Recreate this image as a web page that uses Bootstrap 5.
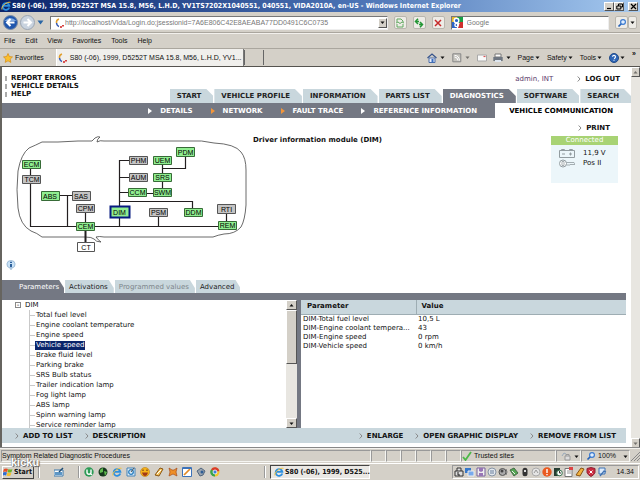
<!DOCTYPE html>
<html lang="en">
<head>
<meta charset="utf-8">
<meta name="viewport" content="width=device-width, initial-scale=1">
<title>VIDA - Vehicle communication</title>
<link rel="stylesheet" href="https://cdn.jsdelivr.net/npm/bootstrap@5.3.0/dist/css/bootstrap.min.css">
<style>
:root{--face:#d4d0c8;--slate:#747883;--pale:#c9d7dd;--ui:"Liberation Sans",Tahoma,sans-serif;--uibold:"DejaVu Sans Condensed","DejaVu Sans",sans-serif;--web:"DejaVu Sans",Verdana,sans-serif}
body{font:7px/10px var(--ui);color:#111;background:var(--face);overflow:hidden}
button,input,table{font:inherit;color:inherit}
button{border:0;padding:0;background:none}
a{color:inherit;text-decoration:none}
svg{display:block;flex:none}
.i7{width:7px;height:7px}.i10{width:10px;height:10px}
.titlebar{height:12px;padding:0 2px 0 1px;background:linear-gradient(90deg,#0a246a,#4a72b4 55%,#a6caf0);color:#fff;font-weight:700;font-family:var(--uibold);gap:1px}
.winbtn,.scroll-btn{width:10px;height:9px;background:var(--face);border:1px solid;border-color:#fff #555 #555 #fff;display:flex;align-items:center;justify-content:center}
.addrbar{height:21px;padding:0 3px;gap:2px}
.field{height:14px;background:#fff;border:1px solid #777;border-right-color:#eee;border-bottom-color:#eee;min-width:0}
.field input{border:0;outline:0;background:none;min-width:0;padding:0;color:#777;width:100%}
.search-field{width:25%}
.sqbtn{width:13px;height:13px;border:1px solid #b9b6ae;background:#eeece7;border-radius:2px;display:flex;align-items:center;justify-content:center}
.menubar{height:15px;padding:0 4px;gap:10px;border-top:1px solid #f2f0ec;box-shadow:0 -1px #aaa69e}
.cmdbar{height:18px;border-top:1px solid #aaa69e;padding-left:3px}
.cmds{gap:2px}
.fav{gap:2px;margin-right:12px}
.pagetab{width:188px;height:17px;padding:0 2px;gap:2px;background:#f0efec;border:1px solid #777;border-width:0 1px 0 0;box-shadow:inset 1px 0 #fff;white-space:nowrap}
.newtab{width:20px;height:15px;border-right:1px solid #666;border-left:1px solid #666}
.viewport-row{border-top:1px solid #55534f;border-left:2px solid #66645f;background:#fff;min-height:0}
.scrollbar-v{width:11px;background:#e8e6e1}
.scroll-btn{width:100%;height:10px;flex:none}
.app-area{font-family:var(--web);min-width:0}
.strong-link{font-weight:700;line-height:8px;display:flex;align-items:center;gap:4px;white-space:nowrap}
.dash{width:2px;height:5px;background:#aaa}
.top-links{padding:7px 3px 0}
.maintabs{gap:1px;margin-top:-9px}
.cut-tab{height:14px;padding:0 12px 0 7px;background:var(--pale);color:#222;display:flex;align-items:center;clip-path:polygon(0 0,calc(100% - 7px) 0,100% 7px,100% 100%,0 100%);white-space:nowrap;font-weight:700}
.cut-tab.on{background:var(--slate);color:#fff}
.subnav{height:15px;background:var(--slate);color:#fff;font-weight:700}
.subnav a{display:flex;align-items:center;gap:8px;white-space:nowrap;padding-right:18px}
.subnav a.here{background:#fff;color:#000;padding:0 18px 0 14px}
.module-view{padding-top:2px}
.diagram{width:248px;height:124px}
.diagram text{font:7px "Liberation Sans",Arial,sans-serif;text-anchor:middle}
.module-name{font-size:inherit;line-height:8px;padding:16px 0 0 3px}
.side{padding:4px 13px 0 0}
.status-box{width:67px;height:47px;background:#ecf6fa}
.status-head{height:9px;line-height:9px;background:#a8d374;color:#fff;text-align:center;margin-bottom:3px}
.subtabs .cut-tab{height:13px;font-weight:400;padding:0 6px 0 4px;clip-path:polygon(0 0,calc(100% - 5px) 0,100% 8px,100% 100%,0 100%)}
.subtabs .cut-tab.on{padding-left:17px;padding-right:5px}
.subtabs .cut-tab:disabled{color:#7d868b}
.subtabs{gap:1px}
.panes{height:135px;background:var(--slate);padding-top:7px;margin-right:5px}
.tree-pane{flex:0 0 295px;background:#fff;min-width:0}
.tree{padding-left:13px;overflow:hidden}
.tree ul{list-style:none;margin:0 0 0 14px;padding:0;border-left:1px solid #c9c9c9}
.tree li{height:10px;display:flex;align-items:center}
.tree li::before{content:"";width:5px;border-top:1px solid #c9c9c9}
.tree button{line-height:9px;padding:0 1px;white-space:nowrap}
.tree .picked{background:#0a246a;color:#fff}
.twig{width:6px;height:6px;border:1px solid #888;line-height:4px;display:flex;align-items:center;justify-content:center}
.values{table-layout:fixed;width:100%;line-height:9px}
.values col:first-child{width:115px}
.values th{height:14px;background:var(--pale);border-bottom:1px solid #9eadb3;padding:0 6px}
.values th+th{border-left:1px solid #9eadb3;padding-left:5px}
.values td{padding:0 2px;white-space:nowrap;overflow:hidden;text-overflow:ellipsis}
.actions{height:15px;background:var(--pale);margin:0 5px 5px 0;padding:0 10px 0 13px}
.statusbar{height:15px;border-top:1px solid #f4f2ee;box-shadow:0 -1px #888;padding-left:1px}
.well{height:12px;border:1px solid;border-color:#999 #f5f5f2 #f5f5f2 #999;display:flex;align-items:center;gap:2px}
.slot{width:15px}
.zone{width:95px}
.taskbar{height:17px;border-top:1px solid #fff;padding:0 1px 0 2px}
.startbtn{height:13px;width:32px;border:1px solid;border-color:#fff #444 #444 #fff;font-weight:700;font-family:var(--uibold);display:flex;align-items:center;gap:1px}
.grip{width:2px;height:12px;border-left:1px solid #999;border-right:1px solid #fff}
.launcher{margin:0 14px}
.running{margin-left:44px}
.taskbtn{width:100px;height:14px;background:#eae8e4;border:1px solid;border-color:#444 #fff #fff #444;font-weight:700;font-family:var(--uibold);display:flex;align-items:center;gap:1px;white-space:nowrap;padding-left:3px}
.tray{height:14px;gap:1px;padding:0 4px 0 1px;border:1px solid;border-color:#999 #fff #fff #999}
.stamp{left:11px;bottom:12px;font:700 11px/12px "Liberation Sans",Arial,sans-serif;color:#fff;text-shadow:1px 1px 1px #555,0 0 1px #555}
</style>
<script src="https://cdn.jsdelivr.net/npm/bootstrap@5.3.0/dist/js/bootstrap.bundle.min.js"></script>
</head>
<body class="vh-100 d-flex flex-column position-relative">
<svg width="0" height="0" class="position-absolute" aria-hidden="true">
<symbol id="ie" viewBox="0 0 10 10"><path d="M8.300 6.500A3.400 3.400 0 1 1 8.400 4.800H2.500" fill="none" stroke="#2b8fe0" stroke-width="1.800"/><path d="M1 8.500C-.5 6 6 .2 9.500 1.300" fill="none" stroke="#f3c23b"/></symbol>
<symbol id="spin" viewBox="0 0 10 10"><path d="M4 1Q1 2 1.500 5" fill="none" stroke="#e0a030" stroke-width="1.500"/><path d="M1.500 5Q2 8 4 8.500" fill="none" stroke="#3558b0" stroke-width="1.500"/><path d="M5 9h2M8 7v1.500" stroke="#d02020" stroke-width="1.700"/></symbol>
<symbol id="dn" viewBox="0 0 7 7"><path d="M1.500 2.500h4l-2 2.500z" fill="#111"/></symbol>
<symbol id="up" viewBox="0 0 7 7"><path d="M1.500 4.500h4l-2-2.500z" fill="#111"/></symbol>
<symbol id="chev" viewBox="0 0 4 6"><path d="M.7.5L3 3 .7 5.500" fill="none" stroke="#888"/></symbol>
<symbol id="tri" viewBox="0 0 4 6"><path d="M0 0l4 3L0 6z" fill="currentColor"/></symbol>
<symbol id="mag" viewBox="0 0 10 10"><path d="M4.500 5.500L1.500 8.500" stroke="#2763b8" stroke-width="1.700"/><circle cx="6" cy="4" r="2.400" fill="#e1efff" stroke="#3c7bd0" stroke-width="1.200"/></symbol>
</svg>

<header>
<div class="titlebar d-flex align-items-center">
<svg class="i10"><use href="#ie"/></svg><span class="flex-grow-1 text-nowrap overflow-hidden">S80 (-06), 1999, D5252T MSA 15.8, M56, L.H.D, YV1TS7202X1040551, 040551, VIDA2010A, en-US - Windows Internet Explorer</span>
<div class="d-flex"><button class="winbtn" aria-label="Minimize"><svg class="i7"><path d="M1 5.500h4" stroke="#000" stroke-width="1.200"/></svg></button><button class="winbtn" aria-label="Restore"><svg class="i7"><path d="M2.500 3V1h4v3H5M.8 3h4v3h-4z" fill="none" stroke="#000"/></svg></button><button class="winbtn ms-1" aria-label="Close"><svg class="i7"><path d="M1 1l5 5M6 1L1 6" stroke="#000" stroke-width="1.200"/></svg></button></div>
</div>
<div class="addrbar d-flex align-items-center">
<button aria-label="Back"><svg width="15" height="15" viewBox="0 0 15 15"><circle cx="7.500" cy="7.500" r="7" fill="#1f56ad" stroke="#7a8ba5"/><path d="M1.500 6Q7 0 13.500 6z" fill="#7fa9e0"/><path d="M11.500 7.500h-7M7.500 4L4 7.500 7.500 11" fill="none" stroke="#fff" stroke-width="2"/></svg></button>
<button aria-label="Forward"><svg width="15" height="15" viewBox="0 0 15 15"><circle cx="7.500" cy="7.500" r="7" fill="#c9d3df" stroke="#9aa5b3"/><path d="M3.500 7.500h7M7.500 4L11 7.500 7.500 11" fill="none" stroke="#fff" stroke-width="2"/></svg></button>
<svg class="i7 me-1" viewBox="0 0 7 7"><path d="M.5 1.500h6l-3 4z" fill="#2a66a5"/></svg>
<div class="field d-flex align-items-center flex-grow-1 ps-1"><svg class="i10"><use href="#spin"/></svg><input aria-label="Address" value="http://localhost/Vida/Login.do;jsessionid=7A6E806C42E8AEABA77DD0491C6C0735"><button class="scroll-btn w-auto me-0" aria-label="Address history"><svg class="i7"><use href="#dn"/></svg></button></div>
<button class="sqbtn ms-1" aria-label="Compatibility view"><svg class="i10" viewBox="0 0 10 10"><path d="M2 4V1h4l2 2v1M2 6v3h6V6" fill="none" stroke="#61a961"/><path d="M1 5l2-1 2 1.500L7 4l2 1" fill="none" stroke="#61a961"/></svg></button>
<button class="sqbtn ms-1" aria-label="Refresh"><svg class="i10" viewBox="0 0 10 10"><path d="M4 .8L1.500 3.500 4 6M1.500 3.500H5M6 4l2.500 2.500L6 9.200M8.500 6.500H5" fill="none" stroke="#249635" stroke-width="1.500"/></svg></button>
<button class="sqbtn ms-1" aria-label="Stop"><svg class="i10" viewBox="0 0 10 10"><path d="M2 2l6 6M8 2L2 8" stroke="#c62a2a" stroke-width="1.500"/></svg></button>
<div class="field search-field d-flex align-items-center ms-1"><svg class="me-1" width="11" height="11" viewBox="0 0 11 11"><path d="M0 0h5v5H0z" fill="#e7b82d"/><path d="M5 0h6v6H5z" fill="#18a045"/><path d="M0 5h5v6H0z" fill="#2b63c6"/><path d="M8 5h3v6H6z" fill="#cf3030"/><circle cx="4.500" cy="3.500" r="2.300" fill="#2b63c6" stroke="#fff" stroke-width="1.400"/><circle cx="4.500" cy="8" r="1.600" fill="none" stroke="#fff" stroke-width="1.400"/></svg><input aria-label="Search" value="Google"></div>
<div class="d-flex ms-1"><button class="sqbtn" aria-label="Search"><svg class="i10"><use href="#mag"/></svg></button><button class="sqbtn w-auto" aria-label="Search options"><svg class="i7"><use href="#dn"/></svg></button></div>
</div>
<nav class="menubar d-flex align-items-center" aria-label="Browser menu"><button>File</button><button>Edit</button><button>View</button><button>Favorites</button><button>Tools</button><button>Help</button></nav>
<div class="cmdbar d-flex align-items-center">
<button class="fav d-flex align-items-center"><svg class="i10" viewBox="0 0 10 10"><path d="M5 .5l1.400 3 3.100.4-2.300 2.200.6 3.300L5 7.800 2.200 9.400l.6-3.300L.5 3.900l3.100-.4z" fill="#fbc02d" stroke="#d58b16" stroke-width=".7"/></svg>Favorites</button>
<button class="pagetab d-flex align-items-center"><svg class="i10"><use href="#spin"/></svg>S80 (-06), 1999, D5252T MSA 15.8, M56, L.H.D, YV1...</button><button class="newtab" aria-label="New tab"></button>
<div class="cmds d-flex align-items-center ms-auto">
<svg class="i10" viewBox="0 0 10 10"><path d="M.5 5L5 1l4.500 4" fill="none" stroke="#35538b" stroke-width="1.200"/><path d="M2 5h6v4.500H2z" fill="#e9effc" stroke="#4a6da8"/><path d="M4.500 6h2v3.500h-2z" fill="#3a6ec0"/></svg><svg class="i7 me-1"><use href="#dn"/></svg>
<svg class="i10" viewBox="0 0 10 10"><path d="M.8.8h8v8h-8z" fill="#c5c3bd" stroke="#888"/><path d="M2.500 4Q5.500 4 6 7.500M2.500 2.300Q7 2.500 7.500 7.500" fill="none" stroke="#fff"/></svg><svg class="i7 me-1 opacity-50"><use href="#dn"/></svg>
<svg class="i10" viewBox="0 0 10 10"><path d="M.5 2h9v6h-9z" fill="#fafafa" stroke="#aaa"/><path d="M6.500 3.500h2" stroke="#d55" stroke-width="1.200"/></svg>
<svg class="i10 ms-1" viewBox="0 0 10 10"><path d="M2 1h6v3H2z" fill="#fff" stroke="#777"/><path d="M.3 4h9.400v4H.3z" fill="#6f7782"/><path d="M2 7h6v2H2z" fill="#dce5ef"/></svg><svg class="i7 me-1"><use href="#dn"/></svg>
<button class="d-flex align-items-center me-1">Page<svg class="i7"><use href="#dn"/></svg></button><button class="d-flex align-items-center me-1">Safety<svg class="i7"><use href="#dn"/></svg></button><button class="d-flex align-items-center me-1">Tools<svg class="i7"><use href="#dn"/></svg></button>
<button class="d-flex align-items-center" aria-label="Help"><svg class="i10" viewBox="0 0 10 10"><circle cx="5" cy="5" r="4.500" fill="#2f66b7" stroke="#234b87"/><path d="M3.500 3.800Q3.600 2.400 5 2.400T6.500 3.800 5 5.800M5 6.800v1" fill="none" stroke="#fff" stroke-width="1.100"/></svg><svg class="i7"><use href="#dn"/></svg></button><b class="px-1 pb-2">»</b>
</div></div>
</header>

<div class="viewport-row d-flex flex-grow-1">
<main class="app-area d-flex flex-column flex-grow-1">
<div class="top-links d-flex justify-content-between align-items-start">
<div><a href="#" class="strong-link"><i class="dash"></i>REPORT ERRORS</a><a href="#" class="strong-link"><i class="dash"></i>VEHICLE DETAILS</a><a href="#" class="strong-link"><i class="dash"></i>HELP</a></div>
<div class="d-flex gap-4 pe-1"><span style="color:#5b3a6b">admin, INT</span><a href="#" class="strong-link me-1"><svg width="4" height="6"><use href="#chev"/></svg>LOG OUT</a></div>
</div>
<nav class="maintabs d-flex justify-content-end" aria-label="Main"><a href="#" class="cut-tab">START</a><a href="#" class="cut-tab">VEHICLE PROFILE</a><a href="#" class="cut-tab">INFORMATION</a><a href="#" class="cut-tab">PARTS LIST</a><a href="#" class="cut-tab on">DIAGNOSTICS</a><a href="#" class="cut-tab">SOFTWARE</a><a href="#" class="cut-tab">SEARCH</a></nav>
<nav class="subnav d-flex justify-content-end" aria-label="Diagnostics"><a href="#"><svg width="4" height="6"><use href="#tri"/></svg>DETAILS</a><a href="#"><svg width="4" height="6" color="#f2953a"><use href="#tri"/></svg>NETWORK</a><a href="#"><svg width="4" height="6" color="#f2953a"><use href="#tri"/></svg>FAULT TRACE</a><a href="#"><svg width="4" height="6"><use href="#tri"/></svg>REFERENCE INFORMATION</a><a href="#" class="here">VEHICLE COMMUNICATION</a></nav>

<section class="module-view d-flex flex-grow-1 align-items-start">
<div class="pt-2 mt-1">
<svg class="diagram" viewBox="2 132 248 124" role="img" aria-label="Network of control modules">
<g fill="none" stroke="#444" stroke-width=".8"><path d="M42 142H58L78 141H92L95 138Q98 136 100 137Q97 139 97 142Q100 140 104 141H190Q201 140 214 143Q235 144 241 152Q246 158 246 170V205Q245 220 241 227Q235 234 224 234Q218 235 213 237H104Q99 236 96 237Q98 240 101 242Q96 242 94 239Q92 237 85 237H42Q37 233 31 231Q20 225 18 208Q16 190 18 171Q21 154 29 148Q36 145 42 142Z"/></g>
<g fill="none" stroke="#231f20" stroke-width="1.200"><path d="M30.500 169V226.500H219M59 195.500H72M67.500 195.500V226M85.500 213V222M119.500 226V160.500H129M119.500 177.500H129M119.500 192.500H128M119.500 201.500H192.500V208M146 193.500H153M162.500 164V188M162.500 168.500H185.500V156M158.500 217V226M226.500 213V221"/><path d="M85.500 231V242" stroke-width="2"/></g>
<g stroke="#376b37" fill="#90ee90"><path d="M22.500 160.500h18v8h-18zM41.500 191.500h18v9h-18zM76.500 222.500h18v8h-18zM128.500 188.500h18v8h-18zM153.500 156.500h18v8h-18zM176.500 147.500h18v9h-18zM153.500 173.500h18v8h-18zM153.500 188.500h18v8h-18zM184.500 208.500h18v8h-18zM218.500 221.500h18v8h-18z"/><path d="M110.500 206.500h19v11h-19z" stroke="#071a80" stroke-width="2"/></g>
<g stroke="#555" fill="#c4c4c4"><path d="M22.500 175.500h18v8h-18zM72.500 191.500h18v9h-18zM76.500 204.500h18v8h-18zM129.500 156.500h18v8h-18zM129.500 173.500h18v8h-18zM149.500 208.500h18v8h-18zM217.500 204.500h18v9h-18z"/><path d="M77.500 242.500h17v9h-17z" fill="#fff"/></g>
<g><text x="31.500" y="167">ECM</text><text x="32" y="182">TCM</text><text x="50" y="198.500">ABS</text><text x="81" y="198.500">SAS</text><text x="85.500" y="211">CPM</text><text x="85.500" y="229">CEM</text><text x="86" y="249.500">CT</text><text x="119.500" y="214.500">DIM</text><text x="138.500" y="163">PHM</text><text x="138.500" y="180">AUM</text><text x="137.500" y="195">CCM</text><text x="162.500" y="163">UEM</text><text x="185.500" y="154.500">PDM</text><text x="162.500" y="180">SRS</text><text x="162.500" y="195">SWM</text><text x="158.500" y="215">PSM</text><text x="193.500" y="215">DDM</text><text x="226.500" y="211.500">RTI</text><text x="227.500" y="228">REM</text></g>
</svg>
<svg class="i10 ms-1 mt-1" viewBox="0 0 10 10"><path d="M5 .5a4 3.800 0 0 1 1 7.500L5 9.800 4 8A4 3.800 0 0 1 5 .5z" fill="#c9e2f7" stroke="#86a9c9" stroke-width=".7"/><path d="M5 1.800v1.200M5 4v3.200" stroke="#134a8b" stroke-width="1.700"/></svg>
</div>
<h1 class="module-name mb-0 fw-bold">Driver information module (DIM)</h1>
<div class="side ms-auto"><a href="#" class="strong-link justify-content-end pe-2 mb-1"><svg width="4" height="6"><use href="#chev"/></svg>PRINT</a>
<div class="status-box"><div class="status-head">Connected</div>
<div class="d-flex align-items-center"><svg class="mx-2" width="16" height="9" viewBox="0 0 16 9"><path d="M.5 1.500h15v7H.5zM2.500 1.500V.5h3v1M10.500 1.500V.5h3v1M3 5h3M10 5h3M11.500 3.500v3" fill="none" stroke="#929ca0"/></svg>11,9 V</div>
<div class="d-flex align-items-center"><svg class="mx-2" width="16" height="9" viewBox="0 0 16 9"><circle cx="4" cy="4.500" r="3.500" fill="#fff" stroke="#929ca0"/><path d="M3 2.500h2v4H3zM7.500 3.500H15L16 5l-1 1-1-1-1 1-1-1-1 1H7.500" fill="none" stroke="#929ca0" stroke-width=".8"/></svg>Pos II</div></div></div>
</section>

<nav class="subtabs d-flex" aria-label="Module views"><button class="cut-tab on">Parameters</button><button class="cut-tab">Activations</button><button class="cut-tab" disabled>Programmed values</button><button class="cut-tab">Advanced</button></nav>
<section class="panes d-flex">
<div class="tree-pane d-flex"><div class="tree flex-grow-1">
<div class="d-flex align-items-center"><span class="twig">-</span><span class="ms-1">DIM</span></div>
<ul><li><button>Total fuel level</button></li><li><button>Engine coolant temperature</button></li><li><button>Engine speed</button></li><li><button class="picked">Vehicle speed</button></li><li><button>Brake fluid level</button></li><li><button>Parking brake</button></li><li><button>SRS Bulb status</button></li><li><button>Trailer indication lamp</button></li><li><button>Fog light lamp</button></li><li><button>ABS lamp</button></li><li><button>Spinn warning lamp</button></li><li><button>Service reminder lamp</button></li></ul></div>
<div class="scrollbar-v d-flex flex-column"><button class="scroll-btn" aria-label="Scroll up"><svg class="i7"><use href="#up"/></svg></button><div class="scroll-btn mb-auto" style="height:42%"></div><button class="scroll-btn" aria-label="Scroll down"><svg class="i7"><use href="#dn"/></svg></button></div></div>
<div class="flex-grow-1 bg-white ms-1"><table class="values"><colgroup><col><col></colgroup><thead><tr><th>Parameter</th><th>Value</th></tr></thead><tbody><tr><td>DIM-Total fuel level</td><td>10,5 L</td></tr><tr><td>DIM-Engine coolant tempera...</td><td>43</td></tr><tr><td>DIM-Engine speed</td><td>0 rpm</td></tr><tr><td>DIM-Vehicle speed</td><td>0 km/h</td></tr></tbody></table></div>
</section>
<div class="actions d-flex align-items-center justify-content-between">
<div class="d-flex gap-2"><button class="strong-link me-1"><svg width="4" height="6"><use href="#chev"/></svg>ADD TO LIST</button><button class="strong-link"><svg width="4" height="6"><use href="#chev"/></svg>DESCRIPTION</button></div>
<div class="d-flex gap-2"><button class="strong-link me-1"><svg width="4" height="6"><use href="#chev"/></svg>ENLARGE</button><button class="strong-link me-1"><svg width="4" height="6"><use href="#chev"/></svg>OPEN GRAPHIC DISPLAY</button><button class="strong-link"><svg width="4" height="6"><use href="#chev"/></svg>REMOVE FROM LIST</button></div>
</div>
</main>
<div class="scrollbar-v d-flex flex-column justify-content-between"><button class="scroll-btn" aria-label="Page up"><svg class="i7 opacity-50"><use href="#up"/></svg></button><button class="scroll-btn" aria-label="Page down"><svg class="i7 opacity-50"><use href="#dn"/></svg></button></div>
</div>

<footer>
<div class="statusbar d-flex align-items-center"><span class="well flex-grow-1">Symptom Related Diagnostic Procedures</span><span class="well slot"></span><span class="well slot"></span><span class="well slot"></span><span class="well slot"></span><span class="well slot"></span><span class="well slot"></span>
<span class="well zone"><svg class="i10" viewBox="0 0 10 10"><path d="M1 6l2.500 3L9 1" fill="none" stroke="#4db848" stroke-width="1.800"/></svg>Trusted sites</span>
<span class="well ps-1"><svg class="i10" viewBox="0 0 10 10"><path d="M4 5h5v4H4zM5 5V3.500h3V5" fill="#ddd" stroke="#999"/><path d="M1 5l2-3 2 1" fill="none" stroke="#9ab"/></svg><svg class="i7"><use href="#dn"/></svg></span>
<span class="well ps-1"><svg class="i10"><use href="#mag"/></svg>100%<svg class="i7 ms-1"><use href="#dn"/></svg></span><svg class="i10" viewBox="0 0 10 10"><path d="M1 10l9-9M4 10l6-6M7 10l3-3" stroke="#888"/></svg></div>
<div class="taskbar d-flex align-items-center">
<button class="startbtn"><svg class="i10" viewBox="0 0 10 10"><path d="M1 2q2-1 4 0L4 5Q2 4 0 5z" fill="#e6502a"/><path d="M5.500 2q2 1 4 0l-1 3q-2 1-4 0z" fill="#6bb12b"/><path d="M0 5.500q2-1 4 0l-1 3q-1.500-1-3 0z" fill="#2f6dd2"/><path d="M4.500 5.500q2 1 4 0l-1 3q-2 1-4 0z" fill="#f5c02c"/></svg>Start</button>
<span class="grip ms-1"></span><svg class="i10 launcher" viewBox="0 0 10 10"><path d="M0 3h9v6H0z" fill="#fff" stroke="#3b78ad"/><path d="M1 5h7v3H1z" fill="#5d96c5"/><path d="M5 5l4-4" stroke="#234e75" stroke-width="1.500"/></svg><span class="grip me-1"></span>
<div class="d-flex gap-1">
<svg class="i10" viewBox="0 0 10 10"><circle cx="5" cy="5" r="4.700" fill="#2c9b55"/><path d="M3 2.500v2.700q0 2 2 2t2-2V2.500M7 7l1 1" fill="none" stroke="#fff" stroke-width="1.400"/></svg>
<svg class="i10" viewBox="0 0 10 10"><circle cx="5" cy="5" r="4.500" fill="#16381d"/><path d="M5 1Q1 2 2 6l3-1zM6 4l3 1-2 4z" fill="#60bd4f"/></svg>
<svg class="i10"><use href="#ie"/></svg>
<svg class="i10" viewBox="0 0 10 10"><path d="M1 1h8v8H1z" fill="#dcecf8" stroke="#4783b6"/><circle cx="5" cy="5" r="2.300" fill="none" stroke="#287fc1" stroke-width="1.300"/><path d="M5 5l3-4" stroke="#555"/></svg>
<svg class="i10" viewBox="0 0 10 10"><circle cx="5" cy="5" r="4.500" fill="#f7b51b" stroke="#bb7811" stroke-width=".6"/><path d="M2 5.500h6Q7 9 5 9T2 5.500z" fill="#a23a16"/><path d="M3 2.500v1.500M7 2.500v1.500" stroke="#522"/></svg>
<svg class="i10" viewBox="0 0 10 10"><path d="M1 8L6 1l3 1-4 7z" fill="#f7c75e" stroke="#8a5514"/><path d="M3 7l4-4" stroke="#fff"/></svg>
<svg class="i10" viewBox="0 0 10 10"><path d="M1 1l3 2h2l3-2-1 4 1 4-4-2-4 2 1-4z" fill="#ee8f27" stroke="#a74d1b" stroke-width=".7"/></svg>
<svg class="i10" viewBox="0 0 10 10"><path d="M.5.5h9v9h-9z" fill="#fff" stroke="#3c72b9"/><path d="M2 8l6-6" stroke="#e38b26" stroke-width="1.700"/><path d="M1 1h8" stroke="#3c72b9" stroke-width="2"/></svg>
<svg class="i10" viewBox="0 0 10 10"><path d="M1 4l4-3 4 3-2 4-3 1z" fill="#9aa4af" stroke="#50657e"/><circle cx="6" cy="5" r="1.500" fill="#2e5d95"/></svg>
<svg class="i10" viewBox="0 0 10 10"><circle cx="5" cy="5" r="4.500" fill="#f2c52e"/><path d="M5 5L1 2.500A4.500 4.500 0 0 1 9.300 4z" fill="#d93b2b"/><path d="M5 5L1 2.500A4.500 4.500 0 0 0 5 9.500z" fill="#36a34c"/><circle cx="5" cy="5" r="2" fill="#3f7fdd" stroke="#fff" stroke-width=".8"/></svg>
</div>
<span class="grip running me-1"></span><button class="taskbtn"><svg class="i10"><use href="#ie"/></svg>S80 (-06), 1999, D525...</button>
<div class="tray d-flex align-items-center ms-auto">
<svg class="i10" viewBox="0 0 10 10"><path d="M1 4h8v5H1zM3 4V1h4v3" fill="#ddd" stroke="#333"/><path d="M4 5v3h2" fill="none" stroke="#222"/></svg>
<svg class="i10" viewBox="0 0 10 10"><path d="M0 1h6v5H0z" fill="#3678cb"/><path d="M3 4h6v5H3z" fill="#78aaed" stroke="#eee"/></svg>
<svg class="i10" viewBox="0 0 10 10"><path d="M1 1h8v8H1z" fill="#eee" stroke="#79629d"/><path d="M3 1v3l2 1 2-1V1M3 9V6h4v3" fill="#9875b6"/></svg>
<svg class="i10" viewBox="0 0 10 10"><circle cx="5" cy="5" r="4" fill="#e3e8ee" stroke="#8895a5"/><path d="M3 4h4M3 6h4" stroke="#687f9b"/></svg>
<svg class="i10" viewBox="0 0 10 10"><circle cx="4.500" cy="5" r="3.500" fill="#aaa" stroke="#555"/><circle cx="4" cy="4" r="1.500" fill="#444"/><path d="M8 2q2 3 0 6" fill="none" stroke="#777"/></svg>
<svg class="i10" viewBox="0 0 10 10"><path d="M1 3l4-2 4 5-4 3z" fill="#54a653" stroke="#476b48"/><path d="M3 4l3 3" stroke="#eee"/></svg>
<svg class="i10" viewBox="0 0 10 10"><rect x="2.500" y=".7" width="5" height="8.600" rx="2.500" fill="#333"/><path d="M4 3h2v2H4z" fill="#ddd"/></svg>
<svg class="i10" viewBox="0 0 10 10"><circle cx="5" cy="5" r="4" fill="#e5e5e5" stroke="#aaa"/><path d="M3 6l2-3 2 3" fill="none" stroke="#999"/></svg>
<svg class="i10" viewBox="0 0 10 10"><circle cx="5" cy="5" r="4.700" fill="#ea5a20"/><path d="M5 2v4M5 7v1.200" stroke="#fff" stroke-width="1.400"/></svg>
<svg class="i10" viewBox="0 0 10 10"><path d="M1 1h6v8H1z" fill="#263d32"/><circle cx="6.500" cy="6" r="2.800" fill="#fff" stroke="#3b7652"/><path d="M6.500 4v2h1.500" fill="none" stroke="#333"/></svg>
<svg class="i10" viewBox="0 0 10 10"><path d="M1 1.500h7v8H1z" fill="#fff" stroke="#777"/><path d="M3 4h4M3 6h4" stroke="#999"/><path d="M5 0h4v3H5z" fill="#d44"/></svg>
<svg class="i10" viewBox="0 0 10 10"><path d="M1 8L6 1l3 1-4 7z" fill="#f1b13e" stroke="#8a5514"/></svg>
<svg class="i10" viewBox="0 0 10 10"><path d="M5 .5l4 1v4Q8 8 5 9.500 2 8 1 5.500v-4z" fill="#cc2c3f" stroke="#8c2234"/><path d="M3.500 3.500l3 3M6.500 3.500l-3 3" stroke="#fff"/></svg>
<svg class="i10" viewBox="0 0 10 10"><path d="M2 1h6v6H2z" fill="#dceafa" stroke="#3f72b3"/><path d="M3 9l4-5 2 1" fill="none" stroke="#3f72b3" stroke-width="1.300"/></svg>
<time class="ms-2">14.34</time></div>
</div>
</footer>
<span class="stamp position-absolute">kicku</span>
</body>
</html>
